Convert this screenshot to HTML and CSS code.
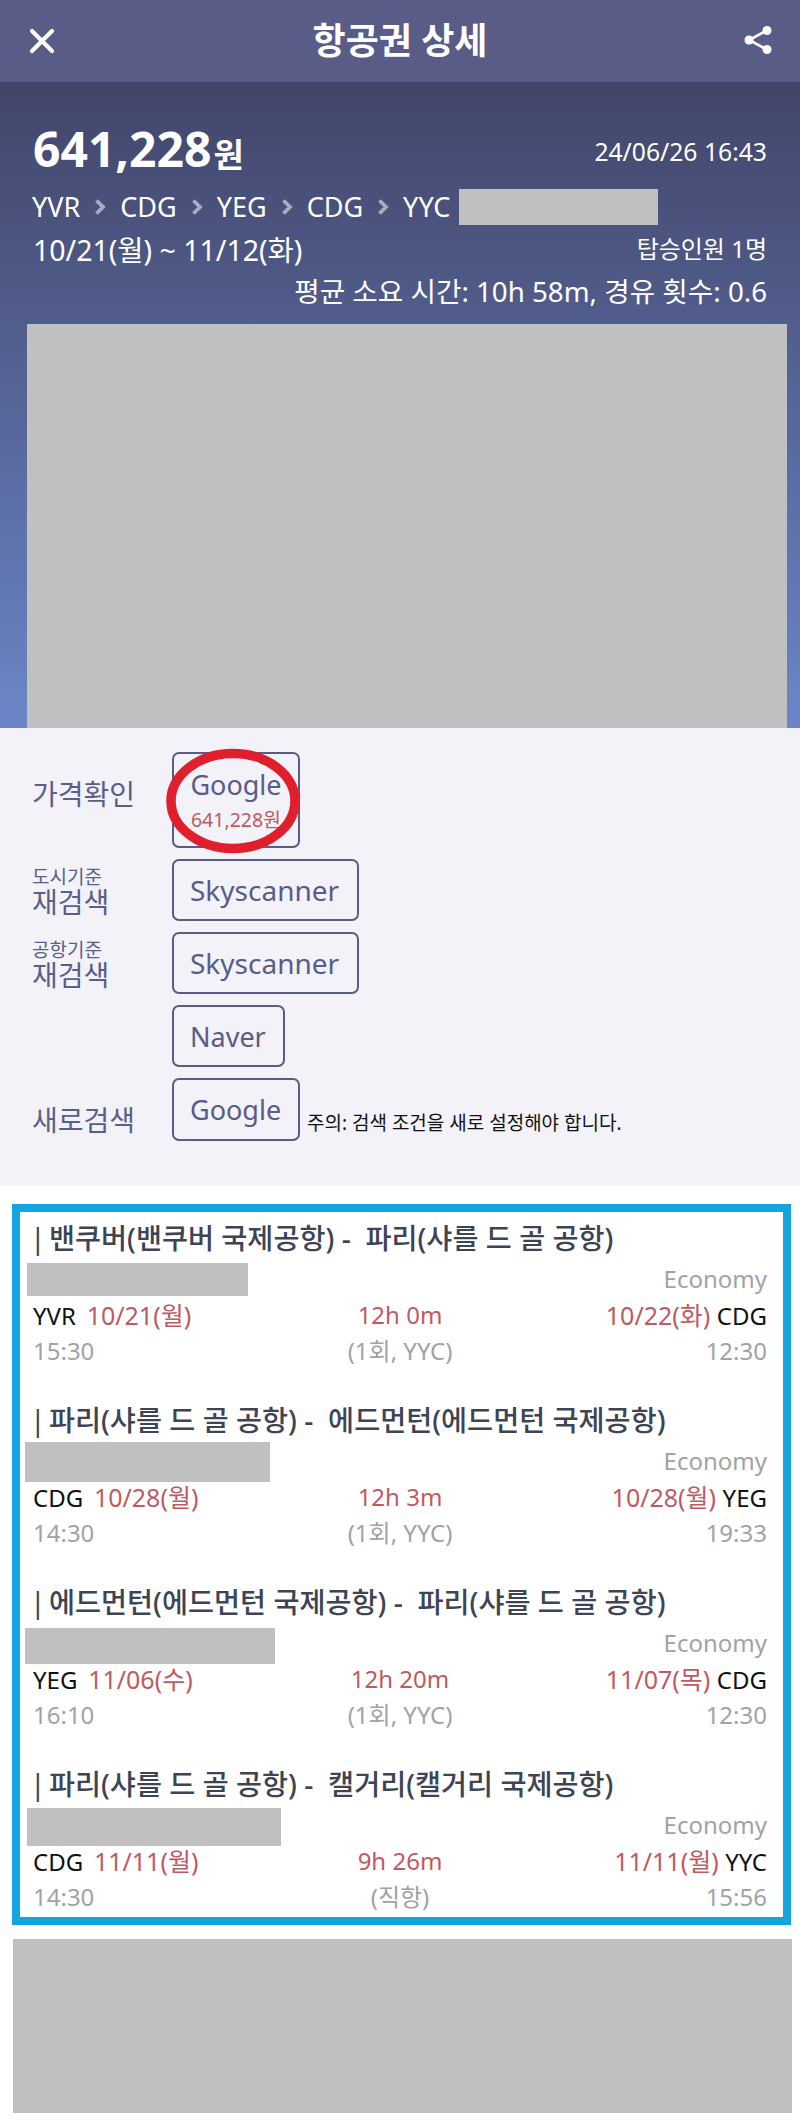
FILE: index.html
```html
<!DOCTYPE html>
<html lang="ko">
<head>
    <meta charset="UTF-8">
    <meta name="viewport" content="width=device-width, initial-scale=1.0">
    <title>항공권 상세</title>
    <link rel="stylesheet" href="styles.css">
</head>
<body>
    <header class="top-bar">
        <svg class="top-icon" width="30" height="30" viewBox="0 0 30 30"><path d="M5 5 L25 25 M25 5 L5 25" stroke="#fff" stroke-width="4.2" stroke-linecap="round"/></svg>
        <h1>항공권 상세</h1>
        <svg class="top-icon" width="30" height="30" viewBox="0 0 30 30"><path d="M24 4.5 L6 14 L24 23.5" fill="none" stroke="#fff" stroke-width="2.6"/><circle cx="24" cy="4.5" r="4.5" fill="#fff"/><circle cx="6" cy="14" r="4.5" fill="#fff"/><circle cx="24" cy="23.5" r="4.5" fill="#fff"/></svg>
    </header>

    <section class="hero">
        <div class="hero-row price-row">
            <div class="price">641,228<span class="won">원</span></div>
            <div class="stamp">24/06/26 16:43</div>
        </div>
        <div class="route">
            <span>YVR</span>
            <svg class="chevron" width="12" height="16" viewBox="0 0 12 16"><path d="M2.5 1.5 L9 8 L2.5 14.5" fill="none" stroke="#a9acc2" stroke-width="3.8"/></svg>
            <span>CDG</span>
            <svg class="chevron" width="12" height="16" viewBox="0 0 12 16"><path d="M2.5 1.5 L9 8 L2.5 14.5" fill="none" stroke="#a9acc2" stroke-width="3.8"/></svg>
            <span>YEG</span>
            <svg class="chevron" width="12" height="16" viewBox="0 0 12 16"><path d="M2.5 1.5 L9 8 L2.5 14.5" fill="none" stroke="#a9acc2" stroke-width="3.8"/></svg>
            <span>CDG</span>
            <svg class="chevron" width="12" height="16" viewBox="0 0 12 16"><path d="M2.5 1.5 L9 8 L2.5 14.5" fill="none" stroke="#a9acc2" stroke-width="3.8"/></svg>
            <span>YYC</span>
            <div class="route-redact"></div>
        </div>
        <div class="hero-row dates-row">
            <div class="dates">10/21(월) ~ 11/12(화)</div>
            <div class="people">탑승인원 1명</div>
        </div>
        <div class="summary">평균 소요 시간: 10h 58m, 경유 횟수: 0.6</div>
        <div class="hero-redact"></div>
    </section>

    <section class="actions">
        <div class="action-row">
            <div class="action-label label-price">가격확인</div>
            <div class="check-wrap">
                <a class="link-button check-button">
                    <span>Google</span>
                    <span class="check-price">641,228원</span>
                </a>
                <svg class="red-circle" width="136" height="106" viewBox="0 0 136 106"><ellipse cx="68" cy="53" rx="62" ry="47.5" fill="none" stroke="#e01f2c" stroke-width="9.5"/></svg>
            </div>
        </div>
        <div class="action-row">
            <div class="action-label label-double"><small>도시기준</small>재검색</div>
            <a class="link-button button-wide">Skyscanner</a>
        </div>
        <div class="action-row">
            <div class="action-label label-double"><small>공항기준</small>재검색</div>
            <a class="link-button button-wide">Skyscanner</a>
        </div>
        <div class="action-row">
            <div class="action-label"></div>
            <a class="link-button button-naver">Naver</a>
        </div>
        <div class="action-row row-bottom">
            <div class="action-label">새로검색</div>
            <a class="link-button button-google">Google</a>
            <div class="action-note">주의: 검색 조건을 새로 설정해야 합니다.</div>
        </div>
    </section>

    <section class="flights">
        <div class="flight">
            <div class="redact redact-1"></div>
            <div class="flight-title"><span class="bar">|</span> 밴쿠버(밴쿠버 국제공항) -&nbsp; 파리(샤를 드 골 공항)</div>
            <div class="flight-class">Economy</div>
            <div class="flight-grid">
                <div><span class="code">YVR</span> <span class="date">&nbsp;10/21(월)</span></div>
                <div class="red mid">12h 0m</div>
                <div class="end"><span class="date">10/22(화)&nbsp;</span><span class="code">CDG</span></div>
                <div class="gray">15:30</div>
                <div class="gray mid">(1회, YYC)</div>
                <div class="gray end">12:30</div>
            </div>
        </div>
        <div class="flight">
            <div class="redact redact-2"></div>
            <div class="flight-title"><span class="bar">|</span> 파리(샤를 드 골 공항) -&nbsp; 에드먼턴(에드먼턴 국제공항)</div>
            <div class="flight-class">Economy</div>
            <div class="flight-grid">
                <div><span class="code">CDG</span> <span class="date">&nbsp;10/28(월)</span></div>
                <div class="red mid">12h 3m</div>
                <div class="end"><span class="date">10/28(월)&nbsp;</span><span class="code">YEG</span></div>
                <div class="gray">14:30</div>
                <div class="gray mid">(1회, YYC)</div>
                <div class="gray end">19:33</div>
            </div>
        </div>
        <div class="flight">
            <div class="redact redact-3"></div>
            <div class="flight-title"><span class="bar">|</span> 에드먼턴(에드먼턴 국제공항) -&nbsp; 파리(샤를 드 골 공항)</div>
            <div class="flight-class">Economy</div>
            <div class="flight-grid">
                <div><span class="code">YEG</span> <span class="date">&nbsp;11/06(수)</span></div>
                <div class="red mid">12h 20m</div>
                <div class="end"><span class="date">11/07(목)&nbsp;</span><span class="code">CDG</span></div>
                <div class="gray">16:10</div>
                <div class="gray mid">(1회, YYC)</div>
                <div class="gray end">12:30</div>
            </div>
        </div>
        <div class="flight">
            <div class="redact redact-4"></div>
            <div class="flight-title"><span class="bar">|</span> 파리(샤를 드 골 공항) -&nbsp; 캘거리(캘거리 국제공항)</div>
            <div class="flight-class">Economy</div>
            <div class="flight-grid">
                <div><span class="code">CDG</span> <span class="date">&nbsp;11/11(월)</span></div>
                <div class="red mid">9h 26m</div>
                <div class="end"><span class="date">11/11(월)&nbsp;</span><span class="code">YYC</span></div>
                <div class="gray">14:30</div>
                <div class="gray mid">(직항)</div>
                <div class="gray end">15:56</div>
            </div>
        </div>
    </section>

    <div class="bottom-redact"></div>
</body>
</html>
```

FILE: styles.css
```css
body { margin: 0; background-color: #fff; font-family: "Noto Sans", "Noto Sans CJK KR", sans-serif; }

.top-bar { height: 82px; padding: 0 27px 0 27px; background-color: #585c87; display: flex; align-items: center; justify-content: space-between; box-sizing: border-box; }
.top-bar h1 { margin: 0; font-size: 36px; font-weight: 700; line-height: 82px; color: #fff; }
.top-icon { display: block; }

.hero { height: 646px; padding: 40px 33px 0 27px; box-sizing: border-box; background: linear-gradient(to bottom, #424569 0%, #6b86c8 100%); color: #fff; font-size: 27px; }
.hero-row { display: flex; justify-content: space-between; align-items: center; padding-left: 6px; }
.price-row { height: 60px; }
.price { font-size: 48px; font-weight: 700; line-height: 60px; }
.won { margin-left: 2px; font-size: 33px; }
.stamp { font-size: 24.7px; margin-top: -2px; }
.route { display: flex; align-items: center; gap: 14px; height: 36px; margin-top: 7px; padding-left: 5px; line-height: 36px; }
.chevron { display: block; }
.route-redact { width: 199px; height: 36px; margin-left: -5px; background-color: #c0c0c0; }
.dates-row { height: 36px; margin-top: 5px; }
.dates { font-size: 28.5px; }
.people { font-size: 24px; margin-top: -2px; }
.summary { height: 36px; margin-top: 7px; line-height: 36px; font-size: 27.7px; text-align: right; }
.hero-redact { width: 760px; height: 404px; margin-top: 15px; background-color: #c0c0c0; }

.actions { height: 458px; padding: 24px 0 0 32px; box-sizing: border-box; background-color: #f2f2f8; display: flex; flex-direction: column; gap: 11px; color: #5a5e8a; }
.action-row { display: flex; align-items: stretch; }
.action-label { width: 140px; flex-shrink: 0; font-size: 28px; }
.label-price { align-self: center; padding-bottom: 14px; }
.label-double { padding-top: 7px; line-height: 28px; }
.label-double small { display: block; font-size: 19px; line-height: 22px; }
.link-button { display: flex; align-items: center; height: 62px; padding: 0 17px; box-sizing: border-box; border: 2px solid #585c87; border-radius: 7px; font-size: 27px; color: #585c87; }
.button-wide { width: 187px; font-size: 28px; padding: 0 0 0 16px; }
.button-naver { width: 113px; padding: 0 0 0 16px; }
.check-wrap { position: relative; }
.check-button { flex-direction: column; justify-content: center; align-items: center; width: 128px; height: 96px; padding: 0; }
.check-button span:first-child { margin-top: -2px; }
.check-price { margin-top: 4px; font-size: 19.5px; line-height: 26px; color: #c05a5f; }
.red-circle { position: absolute; left: -7px; top: -4px; }
.row-bottom { align-items: flex-end; }
.row-bottom .action-label { line-height: 42px; }
.button-google { width: 128px; height: 63px; padding: 0 0 0 16px; }
.action-note { margin-left: 7px; font-size: 19px; line-height: 36px; color: #111; }

.flights { width: 779px; margin: 18px 0 0 12px; padding: 9px 16px 2px 13px; box-sizing: border-box; border: 8px solid #12a5e0; display: flex; flex-direction: column; gap: 34px; }
.flight { position: relative; font-size: 24px; line-height: 36px; }
.flight-title { height: 36px; margin-bottom: 4px; margin-left: -3px; font-size: 28.3px; font-weight: 500; line-height: 34px; color: #3d4453; white-space: nowrap; }
.bar { margin-right: -4px; font-weight: 400; }
.flight-class { height: 36px; text-align: right; color: #a0a3a6; }
.flight-grid { display: grid; grid-template-columns: 1fr auto 1fr; grid-auto-rows: 36px; }
.flight-grid > div:first-child .date { margin-left: -2px; }
.mid { text-align: center; }
.end { text-align: right; }
.code { color: #111; }
.red { color: #c05a5f; }
.date { font-size: 25px; color: #c05a5f; }
.gray { color: #a0a3a6; }

.redact { position: absolute; background-color: #c0c0c0; }
.redact-1 { left: -6px; top: 42px; width: 221px; height: 33px; }
.redact-2 { left: -8px; top: 39px; width: 245px; height: 40px; }
.redact-3 { left: -8px; top: 43px; width: 250px; height: 36px; }
.redact-4 { left: -6px; top: 41px; width: 254px; height: 38px; }

.bottom-redact { width: 779px; height: 174px; margin: 14px 0 0 13px; background-color: #c0c0c0; }
```
